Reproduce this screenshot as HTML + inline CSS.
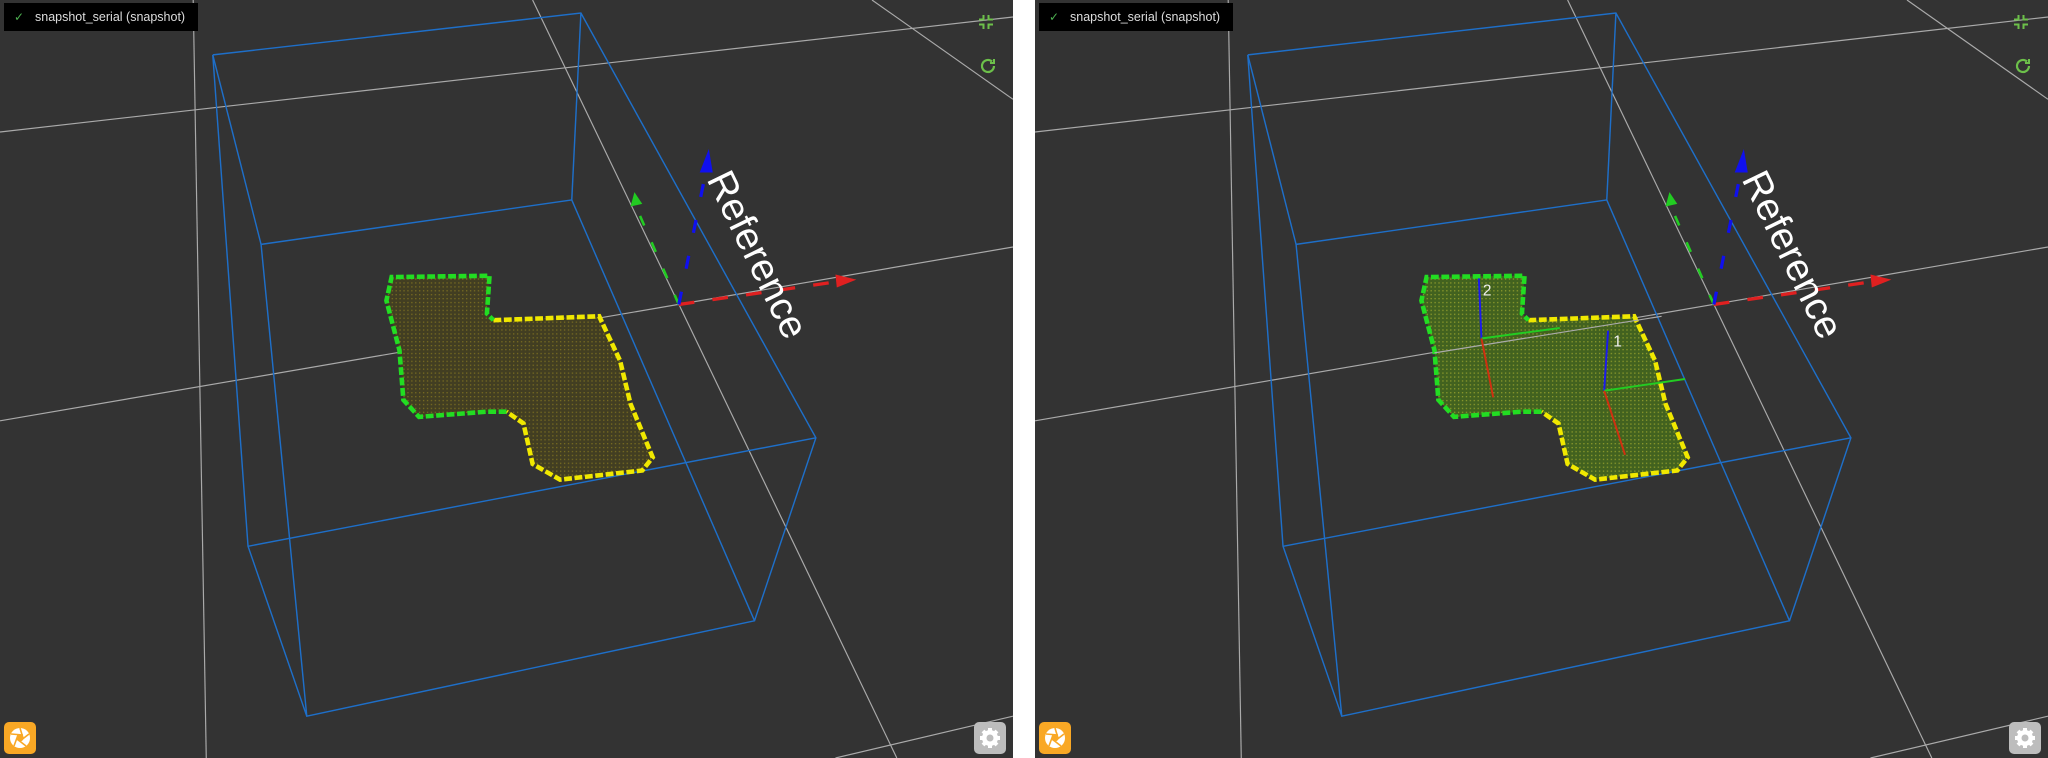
<!DOCTYPE html>
<html><head><meta charset="utf-8"><style>
html,body{margin:0;padding:0;width:2048px;height:758px;overflow:hidden;background:#fff;}
.panel{position:absolute;top:0;width:1013px;height:758px;background:#333;overflow:hidden;}
.panel svg.scene{position:absolute;left:0;top:0;}
.label{position:absolute;left:4px;top:3px;height:28px;width:194px;background:#000;color:#ddd;font:12.5px "Liberation Sans",sans-serif;line-height:28px;}
.label .ck{position:absolute;left:10px;top:0;color:#4caf50;font-size:12px;}
.label .tx{position:absolute;left:31px;top:0;}
.btn{position:absolute;width:32px;height:32px;border-radius:5px;top:722px;}
.ap{left:4px;background:#f9a825;}
.gear{left:974px;background:#bdbdbd;}
.ico{position:absolute;left:978px;}
</style></head><body>

<div class="panel" style="left:0">
<svg class="scene" width="1013" height="758" viewBox="0 0 776 580" preserveAspectRatio="none">
<defs>
<pattern id="dots" width="3" height="3" patternUnits="userSpaceOnUse"><rect width="3" height="3" fill="#423e22"/><rect width="1" height="1" fill="#786c22"/></pattern>
</defs>
<g stroke="#aaa" stroke-width="0.9" fill="none">
<line x1="148" y1="0" x2="158" y2="580"/>
<line x1="0" y1="101" x2="776" y2="13"/>
<line x1="0" y1="322" x2="776" y2="189"/>
<line x1="408" y1="0" x2="687" y2="580"/>
<line x1="668" y1="0" x2="776" y2="76"/>
<line x1="640" y1="580" x2="776" y2="548"/>
</g>
<g stroke="#1e6fc9" stroke-width="1.1" fill="none">
<polyline points="163,42 445,10 625,335 578,475 235,548 190,418 163,42"/>
<line x1="163" y1="42" x2="200" y2="187"/>
<line x1="445" y1="10" x2="438" y2="153"/>
<line x1="200" y1="187" x2="438" y2="153"/>
<line x1="200" y1="187" x2="235" y2="548"/>
<line x1="438" y1="153" x2="578" y2="475"/>
<line x1="190" y1="418" x2="625" y2="335"/>
</g>
<polygon points="300,212 375,211 373,240 378,245 459,242 475,276 483,309 500,350 492,360 429,367 408,355 401,324 388,315 373,315 321,319 309,306 306,268 296,230" fill="url(#dots)"/>
<polyline points="378,245 459,242 475,276 483,309 500,350 492,360 429,367 408,355 401,324 388,315" fill="none" stroke="#f0e800" stroke-width="3.5" stroke-dasharray="6,2"/>
<polyline points="388,315 373,315 321,319 309,306 306,268 296,230 300,212 375,211 373,240 378,245" fill="none" stroke="#22dd22" stroke-width="3.5" stroke-dasharray="6,2"/>
<g stroke-width="2.5">
<line x1="520" y1="233" x2="645" y2="215" stroke="#e02020" stroke-dasharray="12,14"/>
<polygon points="640,210 656,214 641,220" fill="#e02020"/>
<line x1="520" y1="233" x2="488" y2="160" stroke="#22cc22" stroke-dasharray="8,14" stroke-width="2"/>
<polygon points="483,158 486,147 492,156" fill="#22cc22"/>
<line x1="520" y1="233" x2="541" y2="130" stroke="#1010ee" stroke-dasharray="10,18"/>
<polygon points="536,132 543,114 546,132" fill="#1010ee"/>
</g>
<text transform="translate(541,137) rotate(64)" font-family="Liberation Sans,sans-serif" font-size="30" fill="#fff">Reference</text>
</svg>
<div class="label"><span class="ck">✓</span><span class="tx">snapshot_serial (snapshot)</span></div>
<svg class="ico" style="top:14px" width="16" height="16" viewBox="0 0 16 16" fill="none" stroke="#6cc04a" stroke-width="2"><path d="M5.5 1v4.5H1M10.5 1v4.5H15M5.5 15v-4.5H1M10.5 15v-4.5H15"/></svg>
<svg class="ico" style="top:56px" width="20" height="20" viewBox="0 0 20 20" fill="none" stroke="#6cc04a" stroke-width="2.2"><path d="M16 10a6 6 0 1 1-2-4.5"/><path d="M16 3v4h-4" stroke-width="2"/></svg>
<div class="btn ap"><svg width="32" height="32" viewBox="0 0 32 32"><circle cx="16" cy="16" r="10" fill="#fff"/><g stroke="#f9a825" stroke-width="1.6"><line x1="16" y1="6" x2="19" y2="16"/><line x1="25" y1="12" x2="16" y2="19"/><line x1="22" y1="24" x2="13" y2="17"/><line x1="10" y1="24" x2="14" y2="13"/><line x1="7" y1="12" x2="19" y2="13"/></g><circle cx="16" cy="16" r="3.5" fill="#f9a825"/></svg></div>
<div class="btn gear"><svg width="32" height="32" viewBox="0 0 32 32"><g fill="#fff"><circle cx="16" cy="16" r="8"/><g stroke="#fff" stroke-width="4"><line x1="16" y1="6" x2="16" y2="26"/><line x1="6" y1="16" x2="26" y2="16"/><line x1="9" y1="9" x2="23" y2="23"/><line x1="23" y1="9" x2="9" y2="23"/></g></g><circle cx="16" cy="16" r="3.5" fill="#bdbdbd"/></svg></div>
</div>

<div class="panel" style="left:1035px">
<svg class="scene" width="1013" height="758" viewBox="0 0 776 580" preserveAspectRatio="none">
<defs>
<pattern id="dots2" width="3" height="3" patternUnits="userSpaceOnUse"><rect width="3" height="3" fill="#42621f"/><rect width="1" height="1" fill="#8c9a2c"/></pattern>
</defs>
<g stroke="#aaa" stroke-width="0.9" fill="none">
<line x1="148" y1="0" x2="158" y2="580"/>
<line x1="0" y1="101" x2="776" y2="13"/>
<line x1="0" y1="322" x2="776" y2="189"/>
<line x1="408" y1="0" x2="687" y2="580"/>
<line x1="668" y1="0" x2="776" y2="76"/>
<line x1="640" y1="580" x2="776" y2="548"/>
</g>
<g stroke="#1e6fc9" stroke-width="1.1" fill="none">
<polyline points="163,42 445,10 625,335 578,475 235,548 190,418 163,42"/>
<line x1="163" y1="42" x2="200" y2="187"/>
<line x1="445" y1="10" x2="438" y2="153"/>
<line x1="200" y1="187" x2="438" y2="153"/>
<line x1="200" y1="187" x2="235" y2="548"/>
<line x1="438" y1="153" x2="578" y2="475"/>
<line x1="190" y1="418" x2="625" y2="335"/>
</g>
<polygon points="300,212 375,211 373,240 378,245 459,242 475,276 483,309 500,350 492,360 429,367 408,355 401,324 388,315 373,315 321,319 309,306 306,268 296,230" fill="url(#dots2)"/>
<polyline points="378,245 459,242 475,276 483,309 500,350 492,360 429,367 408,355 401,324 388,315" fill="none" stroke="#f0e800" stroke-width="3.5" stroke-dasharray="6,2"/>
<polyline points="388,315 373,315 321,319 309,306 306,268 296,230 300,212 375,211 373,240 378,245" fill="none" stroke="#22dd22" stroke-width="3.5" stroke-dasharray="6,2"/>
<line x1="306" y1="270" x2="480" y2="242" stroke="#aaa" stroke-width="0.9"/>
<g stroke-width="1.5">
<line x1="342" y1="259" x2="340" y2="213" stroke="#1a1aee"/>
<line x1="342" y1="259" x2="402" y2="251" stroke="#22cc22"/>
<line x1="342" y1="259" x2="351" y2="304" stroke="#d03010"/>
<line x1="436" y1="299" x2="439" y2="253" stroke="#1a1aee"/>
<line x1="436" y1="299" x2="498" y2="290" stroke="#22cc22"/>
<line x1="436" y1="299" x2="452" y2="348" stroke="#d03010"/>
</g>
<text x="343" y="226" font-family="Liberation Sans,sans-serif" font-size="12" fill="#eee">2</text>
<text x="443" y="265" font-family="Liberation Sans,sans-serif" font-size="12" fill="#eee">1</text>
<g stroke-width="2.5">
<line x1="520" y1="233" x2="645" y2="215" stroke="#e02020" stroke-dasharray="12,14"/>
<polygon points="640,210 656,214 641,220" fill="#e02020"/>
<line x1="520" y1="233" x2="488" y2="160" stroke="#22cc22" stroke-dasharray="8,14" stroke-width="2"/>
<polygon points="483,158 486,147 492,156" fill="#22cc22"/>
<line x1="520" y1="233" x2="541" y2="130" stroke="#1010ee" stroke-dasharray="10,18"/>
<polygon points="536,132 543,114 546,132" fill="#1010ee"/>
</g>
<text transform="translate(541,137) rotate(64)" font-family="Liberation Sans,sans-serif" font-size="30" fill="#fff">Reference</text>
</svg>
<div class="label"><span class="ck">✓</span><span class="tx">snapshot_serial (snapshot)</span></div>
<svg class="ico" style="top:14px" width="16" height="16" viewBox="0 0 16 16" fill="none" stroke="#6cc04a" stroke-width="2"><path d="M5.5 1v4.5H1M10.5 1v4.5H15M5.5 15v-4.5H1M10.5 15v-4.5H15"/></svg>
<svg class="ico" style="top:56px" width="20" height="20" viewBox="0 0 20 20" fill="none" stroke="#6cc04a" stroke-width="2.2"><path d="M16 10a6 6 0 1 1-2-4.5"/><path d="M16 3v4h-4" stroke-width="2"/></svg>
<div class="btn ap"><svg width="32" height="32" viewBox="0 0 32 32"><circle cx="16" cy="16" r="10" fill="#fff"/><g stroke="#f9a825" stroke-width="1.6"><line x1="16" y1="6" x2="19" y2="16"/><line x1="25" y1="12" x2="16" y2="19"/><line x1="22" y1="24" x2="13" y2="17"/><line x1="10" y1="24" x2="14" y2="13"/><line x1="7" y1="12" x2="19" y2="13"/></g><circle cx="16" cy="16" r="3.5" fill="#f9a825"/></svg></div>
<div class="btn gear"><svg width="32" height="32" viewBox="0 0 32 32"><g fill="#fff"><circle cx="16" cy="16" r="8"/><g stroke="#fff" stroke-width="4"><line x1="16" y1="6" x2="16" y2="26"/><line x1="6" y1="16" x2="26" y2="16"/><line x1="9" y1="9" x2="23" y2="23"/><line x1="23" y1="9" x2="9" y2="23"/></g></g><circle cx="16" cy="16" r="3.5" fill="#bdbdbd"/></svg></div>
</div>

</body></html>
